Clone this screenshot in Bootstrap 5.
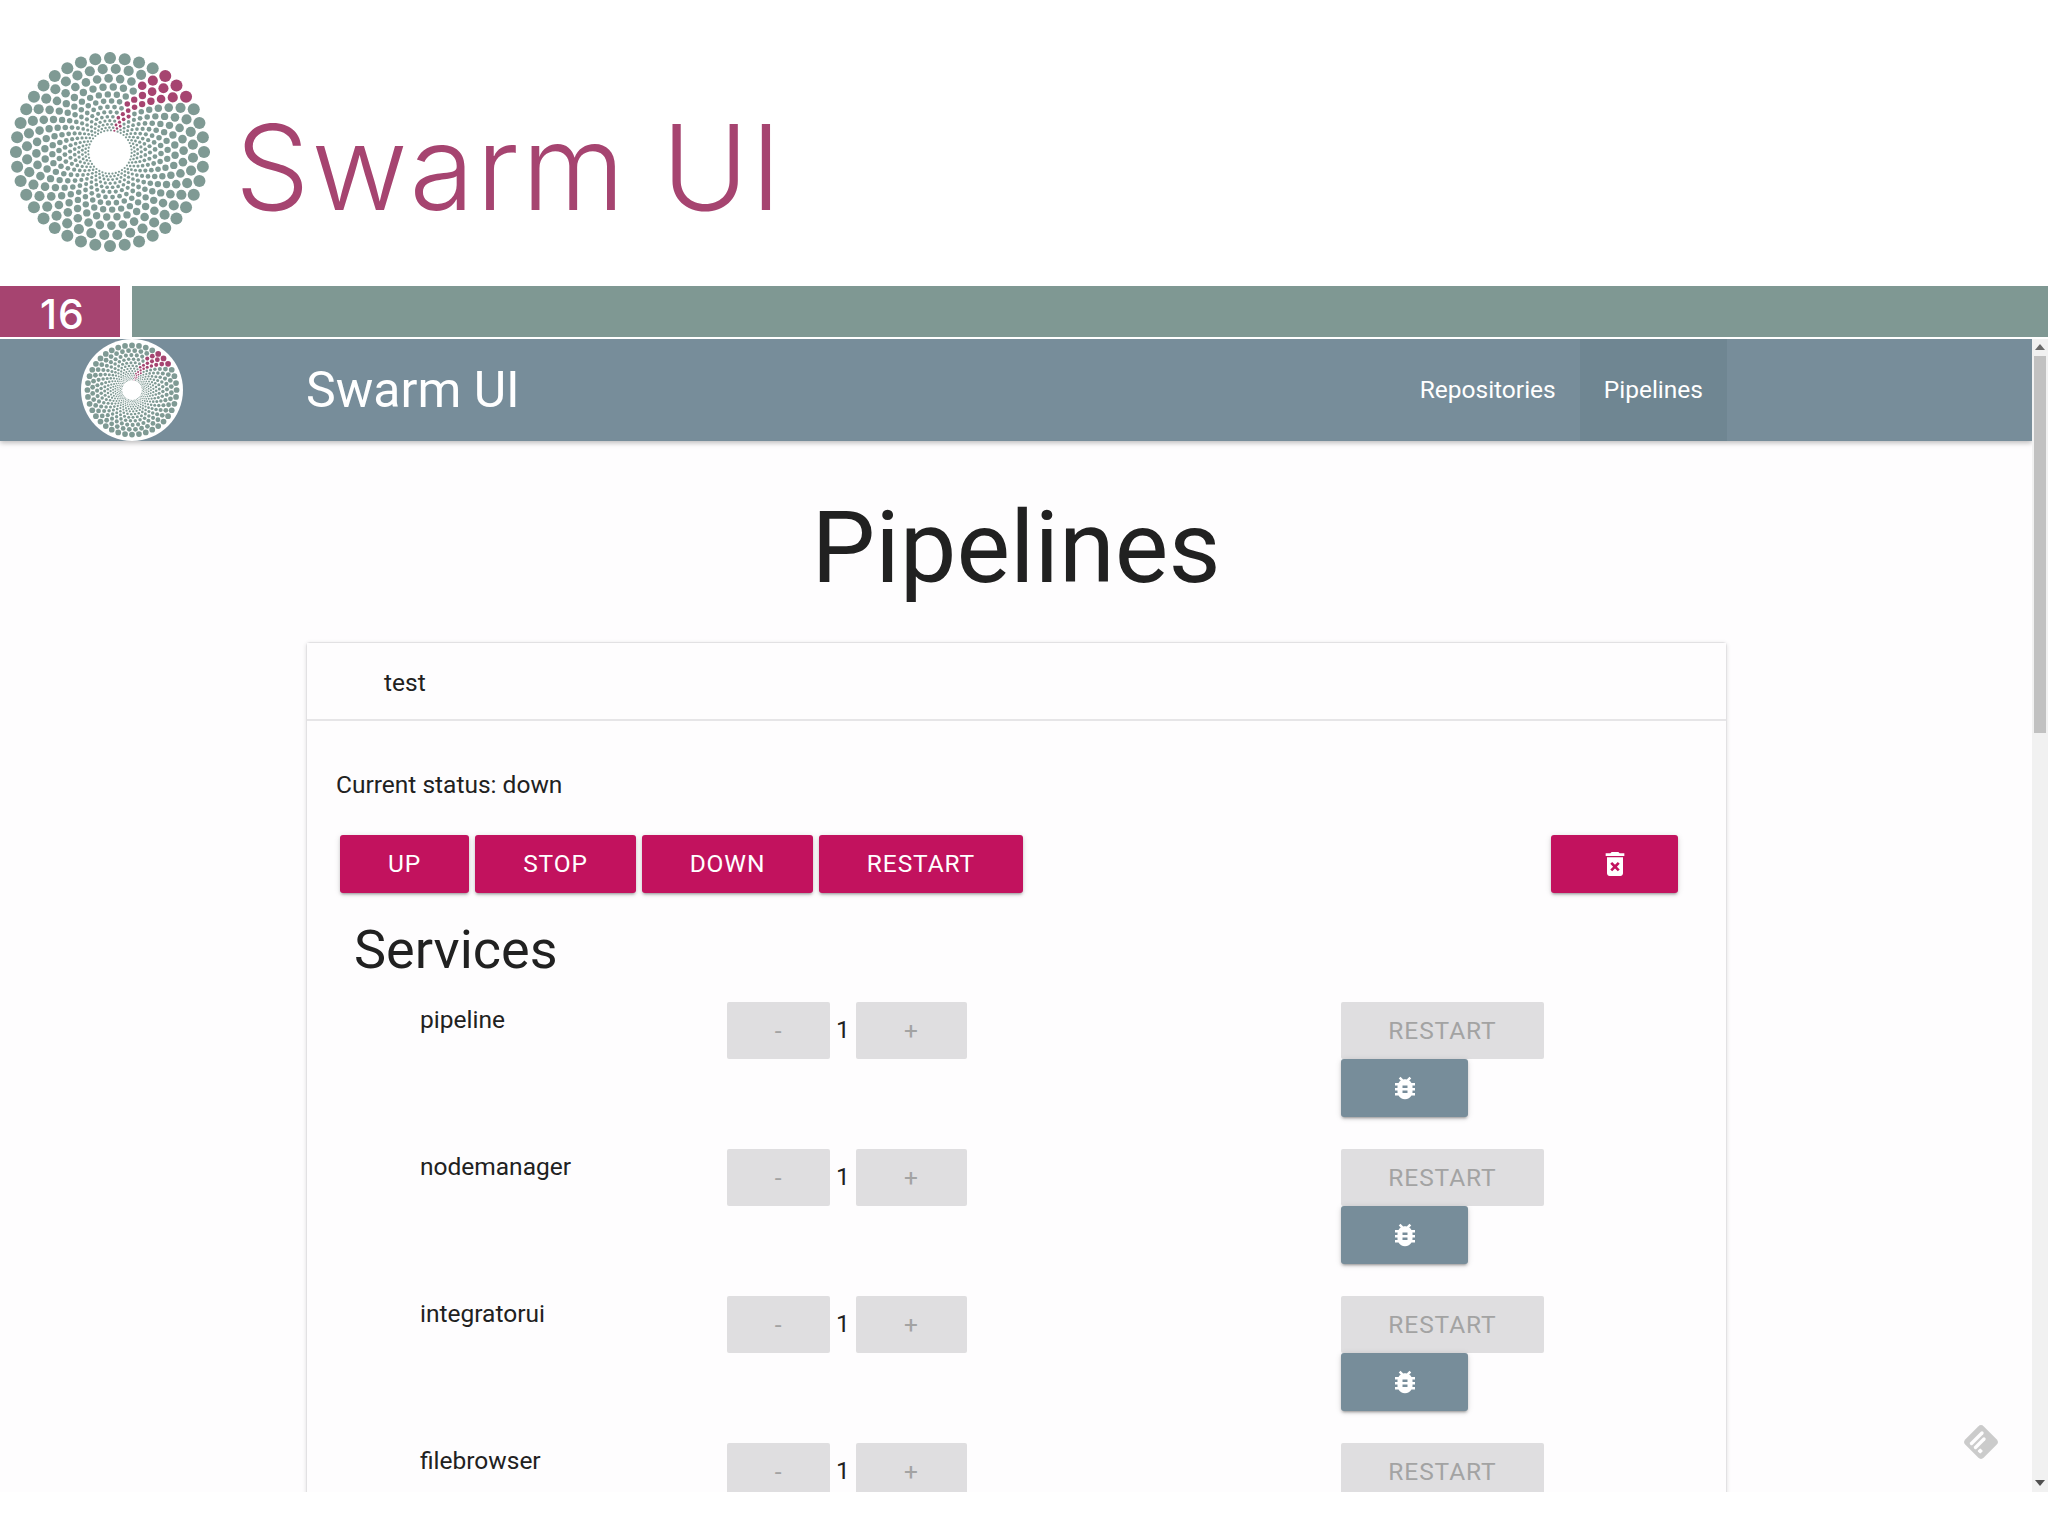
<!DOCTYPE html>
<html lang="en">
<head>
<meta charset="utf-8">
<title>Swarm UI</title>
<link href="https://cdn.jsdelivr.net/npm/bootstrap@5.3.0/dist/css/bootstrap.min.css" rel="stylesheet">
<style>
html,body{height:100%;overflow:hidden;background:#fff;}
body{font-family:Roboto,"Liberation Sans",sans-serif;color:#212121;font-size:24.5px;}
.slide-head{height:286px;padding:52px 0 0 10px;gap:25px;}
.slide-mark{width:200px;height:200px;flex:none;}
.slide-title{font-family:Inter,"Noto Sans",sans-serif;font-weight:350;font-size:118px;line-height:1;color:#a64470;margin:56px 0 0;letter-spacing:1.9px;}
.slide-bar{height:51px;margin-bottom:2px;gap:12px;}
.slide-no{width:120px;background:#a64470;color:#fff;font-family:Inter,"Noto Sans",sans-serif;font-weight:500;font-size:41px;line-height:46px;padding:5px 0 0 40px;letter-spacing:1px;}
.slide-rest{background:#7f9893;}
.app-frame{height:1153px;}
.app-view{width:2032px;overflow:hidden;background:#fefdfe;position:relative;}
.app-nav{height:102px;background:#778d9a;padding:0;box-shadow:0 2px 5px rgba(0,0,0,.26);align-items:stretch;flex-wrap:nowrap;justify-content:flex-start;}
.app-brandbox{width:306px;flex:none;padding-left:81px;}
.app-logo{width:102px;height:102px;display:block;}
.app-brand{color:#fff;font-size:50px;line-height:102px;padding:0;margin:0;}
.app-brand:hover{color:#fff;}
.app-links{margin-left:auto;margin-right:305px;flex-direction:row;}
.app-link{color:#fff;font-size:24.5px;line-height:102px;padding:0 24px;display:block;text-decoration:none;}
.app-link:hover{color:#fff;}
.app-link.is-on{background:#6f8692;}
.page-title{font-size:101px;font-weight:400;text-align:center;line-height:1;margin:56px 0 0;height:100px;color:#212121;padding-top:0;}
.pipe-card{margin:45px 305px 0 306px;border-radius:4px;border:1px solid #e2e1e3;box-shadow:0 1px 4px rgba(0,0,0,.12);background:#fefdfe;}
.pipe-head{height:78px;background:#fefdfe;border-bottom:2px solid #e6e5e7;padding:0 0 0 77px;line-height:79px;font-size:24.5px;}
.pipe-body{padding:0 0 0 29px;}
.pipe-status{margin:0;height:114px;padding-top:44px;line-height:40px;font-size:24.5px;}
.pipe-actions{height:58px;padding:0 48px 0 4px;gap:6px;}
.act-btn{height:58px;border:0;border-radius:3px;font-size:24.5px;letter-spacing:.9px;color:#fff;text-transform:uppercase;padding:0;box-shadow:0 3px 2px -2px rgba(0,0,0,.2),0 2px 3px rgba(0,0,0,.15),0 1px 6px rgba(0,0,0,.12);display:flex;align-items:center;justify-content:center;}
.act-pink{background:#c2125e;}
.act-pink:hover,.act-blue:hover{color:#fff;}
.act-blue{background:#778d9a;}
.w-up{width:129px}.w-stop{width:161px}.w-down{width:171px}.w-restart{width:204px}.w-icon{width:127px}
.serv-title{font-size:54px;font-weight:400;line-height:58px;margin:28px 0 0 18px;height:81px;padding:0;color:#212121;}
.serv-row{height:147px;}
.serv-name{width:391px;padding-left:84px;line-height:36px;font-size:24.5px;}
.serv-scale{width:614px;gap:0;}
.flat-btn{height:57px;background:#dfdee0;border:0;border-radius:2px;color:#a3a3a3;font-size:24.5px;letter-spacing:.9px;padding:2px 0 0;display:flex;align-items:center;justify-content:center;}
.flat-btn:disabled{background:#dfdee0;color:#a3a3a3;opacity:1;}
.w-minus{width:103px}.w-plus{width:111px}.w-flat{width:203px}
.serv-num{width:26px;text-align:center;line-height:56px;font-size:24.5px;}
.serv-ops{width:203px;}
.feed-mark{position:absolute;left:1960px;top:1082px;width:42px;height:42px;}
.fake-scroll{width:16px;background:#f1f1f1;}
.fake-thumb{width:12px;height:377px;background:#c1c1c1;margin:6px 0 0 2px;}
.arr-up{width:0;height:0;border:5px solid transparent;border-top:0;border-bottom:6px solid #6a6a6a;margin:5px 0 0 3px;}
.arr-dn{width:0;height:0;border:5px solid transparent;border-bottom:0;border-top:6px solid #505050;margin:auto 0 6px 3px;}
.icon-defs{display:none;}
</style>
</head>
<body>
<svg class="icon-defs" aria-hidden="true"><symbol id="bug-ico" viewBox="0 0 24 24"><path fill="#fff" d="M20 8h-2.81c-.45-.78-1.07-1.45-1.82-1.96L17 4.41 15.59 3l-2.17 2.17C12.96 5.06 12.49 5 12 5c-.49 0-.96.06-1.41.17L8.41 3 7 4.41l1.62 1.63C7.88 6.55 7.26 7.22 6.81 8H4v2h2.09c-.05.33-.09.66-.09 1v1H4v2h2v1c0 .34.04.67.09 1H4v2h2.81c1.04 1.79 2.97 3 5.19 3s4.15-1.21 5.19-3H20v-2h-2.09c.05-.33.09-.66.09-1v-1h2v-2h-2v-1c0-.34-.04-.67-.09-1H20V8zm-6 8h-4v-2h4v2zm0-4h-4v-2h4v2z"/></symbol></svg>
<header class="slide-head d-flex align-items-start">
  <svg class="slide-mark js-mark" viewBox="-100 -100 200 200" aria-hidden="true"></svg>
  <h1 class="slide-title">Swarm UI</h1>
</header>
<div class="slide-bar d-flex">
  <div class="slide-no">16</div>
  <div class="slide-rest flex-grow-1"></div>
</div>
<div class="app-frame d-flex">
  <div class="app-view">
    <nav class="navbar app-nav">
      <div class="app-brandbox">
        <svg class="app-logo js-mark" data-disc="1" viewBox="-100 -100 200 200" aria-hidden="true"></svg>
      </div>
      <a class="navbar-brand app-brand" href="#">Swarm UI</a>
      <div class="nav app-links">
        <a class="app-link" href="#">Repositories</a>
        <a class="app-link is-on" href="#">Pipelines</a>
      </div>
    </nav>
    <h1 class="page-title">Pipelines</h1>
    <div class="card pipe-card">
      <div class="pipe-head">test</div>
      <div class="pipe-body">
        <p class="pipe-status">Current status: down</p>
        <div class="pipe-actions d-flex">
          <button class="btn act-btn act-pink w-up">UP</button>
          <button class="btn act-btn act-pink w-stop">STOP</button>
          <button class="btn act-btn act-pink w-down">DOWN</button>
          <button class="btn act-btn act-pink w-restart">RESTART</button>
          <button class="btn act-btn act-pink w-icon ms-auto" aria-label="Delete">
            <svg width="32" height="32" viewBox="0 0 24 24" fill="#fff"><path d="M6,19C6,20.1 6.9,21 8,21H16C17.1,21 18,20.1 18,19V7H6V19M8.46,11.88L9.87,10.47L12,12.59L14.12,10.47L15.53,11.88L13.41,14L15.53,16.12L14.12,17.53L12,15.41L9.87,17.53L8.46,16.12L10.59,14L8.46,11.88M15.5,4L14.5,3H9.5L8.5,4H5V6H19V4H15.5Z"/></svg>
          </button>
        </div>
        <h2 class="serv-title">Services</h2>
        <div class="serv-row d-flex">
          <div class="serv-name">pipeline</div>
          <div class="serv-scale d-flex align-items-start">
            <button class="btn flat-btn w-minus" disabled>-</button><span class="serv-num">1</span><button class="btn flat-btn w-plus" disabled>+</button>
          </div>
          <div class="serv-ops">
            <button class="btn flat-btn w-flat" disabled>RESTART</button>
            <button class="btn act-btn act-blue w-icon" aria-label="Debug"><svg width="30" height="30"><use href="#bug-ico"/></svg></button>
          </div>
        </div>
        <div class="serv-row d-flex">
          <div class="serv-name">nodemanager</div>
          <div class="serv-scale d-flex align-items-start">
            <button class="btn flat-btn w-minus" disabled>-</button><span class="serv-num">1</span><button class="btn flat-btn w-plus" disabled>+</button>
          </div>
          <div class="serv-ops">
            <button class="btn flat-btn w-flat" disabled>RESTART</button>
            <button class="btn act-btn act-blue w-icon" aria-label="Debug"><svg width="30" height="30"><use href="#bug-ico"/></svg></button>
          </div>
        </div>
        <div class="serv-row d-flex">
          <div class="serv-name">integratorui</div>
          <div class="serv-scale d-flex align-items-start">
            <button class="btn flat-btn w-minus" disabled>-</button><span class="serv-num">1</span><button class="btn flat-btn w-plus" disabled>+</button>
          </div>
          <div class="serv-ops">
            <button class="btn flat-btn w-flat" disabled>RESTART</button>
            <button class="btn act-btn act-blue w-icon" aria-label="Debug"><svg width="30" height="30"><use href="#bug-ico"/></svg></button>
          </div>
        </div>
        <div class="serv-row d-flex">
          <div class="serv-name">filebrowser</div>
          <div class="serv-scale d-flex align-items-start">
            <button class="btn flat-btn w-minus" disabled>-</button><span class="serv-num">1</span><button class="btn flat-btn w-plus" disabled>+</button>
          </div>
          <div class="serv-ops">
            <button class="btn flat-btn w-flat" disabled>RESTART</button>
          </div>
        </div>
      </div>
    </div>
    <svg class="feed-mark" viewBox="0 0 42 42" aria-hidden="true">
      <rect x="8" y="8" width="26" height="26" rx="4" fill="#cbcbcb" transform="rotate(45 21 21)"/>
      <g fill="none" stroke="#fefdfe" stroke-width="3.4" stroke-linecap="round"><path d="M11.5 22.5 L22 12"/><path d="M15.5 26.5 L24 18"/></g>
      <rect x="18.2" y="28" width="4" height="4" rx="1" fill="#fefdfe" transform="rotate(45 20.2 30)"/>
    </svg>
  </div>
  <div class="fake-scroll d-flex flex-column">
    <div class="arr-up"></div>
    <div class="fake-thumb"></div>
    <div class="arr-dn"></div>
  </div>
</div>
<script src="https://cdn.jsdelivr.net/npm/bootstrap@5.3.0/dist/js/bootstrap.bundle.min.js"></script>
<script>
document.querySelectorAll('.js-mark').forEach(function (svg) {
  var disc = !!svg.dataset.disc;
  var out = disc ? '<circle r="100" fill="#fff"/><g transform="scale(.93)">' : '';
  var r = 94, ring = 0, n = 40, step = 360 / n;
  while (r > 21) {
    for (var j = 0; j < n; j++) {
      var a = j * step + ring * step * 0.44;
      a = ((a % 360) + 360) % 360;
      var rad = (a - 90) * Math.PI / 180;
      var lo = 8 + (r - 23) * 0.31, hi = 21 + (r - 23) * 0.53;
      var col = (a >= lo && a <= hi) ? '#a64470' : '#7f9a94';
      var dot = r * (0.05 + 0.014 * Math.pow(r / 94, 2));
      out += '<circle cx="' + (r * Math.cos(rad)).toFixed(2) + '" cy="' + (r * Math.sin(rad)).toFixed(2) + '" r="' + dot.toFixed(2) + '" fill="' + col + '"/>';
    }
    r *= 0.885;
    ring++;
  }
  svg.innerHTML = out + (disc ? '</g>' : '');
});
</script>
</body>
</html>
